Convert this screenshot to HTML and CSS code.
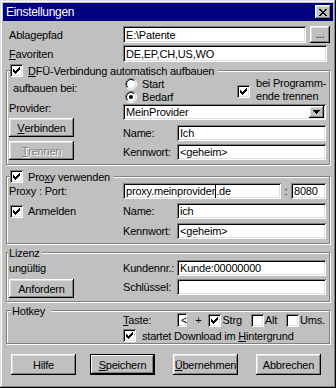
FILE: index.html
```html
<!DOCTYPE html>
<html lang="de">
<head>
    <meta charset="UTF-8">
    <meta name="viewport" content="width=device-width, initial-scale=1.0">
    <title>Einstellungen</title>
    <link rel="stylesheet" href="styles.css">
</head>
<body>

<div class="window">
    <div class="titlebar">
        <span class="title">Einstellungen</span>
        <span class="close">
            <svg width="8" height="7" viewBox="0 0 8 7" shape-rendering="crispEdges"><path d="M0 0h2v1h-2zM6 0h2v1h-2zM1 1h2v1h-2zM5 1h2v1h-2zM2 2h4v1h-4zM3 3h2v1h-2zM2 4h4v1h-4zM1 5h2v1h-2zM5 5h2v1h-2zM0 6h2v1h-2zM6 6h2v1h-2z" fill="#000"/></svg>
        </span>
    </div>

    <div class="content">
        <div class="line first">
            <span class="label">Ablagepfad</span>
            <div class="field path">E:\Patente</div>
            <div class="btn browse">...</div>
        </div>
        <div class="line">
            <span class="label"><u>F</u>avoriten</span>
            <div class="field fav">DE,EP,CH,US,WO</div>
        </div>

        <!-- DFÜ -->
        <div class="group">
            <div class="legend with-check">
                <span class="chk"><svg width="13" height="13" viewBox="0 0 13 13" shape-rendering="crispEdges"><path d="M9 3h1v1h-1zM8 4h2v1h-2zM3 5h1v1h-1zM7 5h3v1h-3zM3 6h2v1h-2zM6 6h3v1h-3zM3 7h5v1h-5zM4 8h3v1h-3zM5 9h1v1h-1z" fill="#000"/></svg></span>
                <span><u>D</u>FÜ-Verbindung automatisch aufbauen</span>
            </div>
            <div class="split">
                <div class="left">
                    <span class="text when">aufbauen bei:</span>
                    <span class="text provider">Provider:</span>
                    <div class="btn side connect"><u>V</u>erbinden</div>
                    <div class="btn side disabled hangup-btn"><u>T</u>rennen</div>
                </div>
                <div class="right">
                    <div class="options">
                        <div class="radios">
                            <div class="opt">
                                <svg width="12" height="12" viewBox="0 0 12 12"><circle cx="6" cy="6" r="4.5" fill="#fff"/><path d="M2.1 9.9A5.5 5.5 0 0 1 9.9 2.1" fill="none" stroke="#808080"/><path d="M9.9 2.1A5.5 5.5 0 0 1 2.1 9.9" fill="none" stroke="#fff"/><path d="M2.8 9.2A4.5 4.5 0 0 1 9.2 2.8" fill="none" stroke="#000"/><path d="M9.2 2.8A4.5 4.5 0 0 1 2.8 9.2" fill="none" stroke="#dfdfdf"/></svg>
                                <span>Start</span>
                            </div>
                            <div class="opt">
                                <svg width="12" height="12" viewBox="0 0 12 12"><circle cx="6" cy="6" r="4.5" fill="#fff"/><path d="M2.1 9.9A5.5 5.5 0 0 1 9.9 2.1" fill="none" stroke="#808080"/><path d="M9.9 2.1A5.5 5.5 0 0 1 2.1 9.9" fill="none" stroke="#fff"/><path d="M2.8 9.2A4.5 4.5 0 0 1 9.2 2.8" fill="none" stroke="#000"/><path d="M9.2 2.8A4.5 4.5 0 0 1 2.8 9.2" fill="none" stroke="#dfdfdf"/><circle cx="6" cy="6" r="2" fill="#000"/></svg>
                                <span>Bedarf</span>
                            </div>
                        </div>
                        <div class="hangup">
                            <span class="chk"><svg width="13" height="13" viewBox="0 0 13 13" shape-rendering="crispEdges"><path d="M9 3h1v1h-1zM8 4h2v1h-2zM3 5h1v1h-1zM7 5h3v1h-3zM3 6h2v1h-2zM6 6h3v1h-3zM3 7h5v1h-5zM4 8h3v1h-3zM5 9h1v1h-1z" fill="#000"/></svg></span>
                            <span class="hangup-text">bei Programm-<br>ende trennen</span>
                        </div>
                    </div>
                    <div class="field select">
                        <span>MeinProvider</span>
                        <span class="drop"><svg width="7" height="4" viewBox="0 0 7 4" shape-rendering="crispEdges"><path d="M0 0h7v1h-1v1h-1v1h-1v1h-1v-1h-1v-1h-1v-1h-1z" fill="#000"/></svg></span>
                    </div>
                    <div class="pair name-row">
                        <span class="label2">Name:</span>
                        <div class="field grow">Ich</div>
                    </div>
                    <div class="pair pw-row">
                        <span class="label2">Kennwort:</span>
                        <div class="field grow">&lt;geheim&gt;</div>
                    </div>
                </div>
            </div>
        </div>

        <!-- Proxy -->
        <div class="group proxy">
            <div class="legend with-check">
                <span class="chk"><svg width="13" height="13" viewBox="0 0 13 13" shape-rendering="crispEdges"><path d="M9 3h1v1h-1zM8 4h2v1h-2zM3 5h1v1h-1zM7 5h3v1h-3zM3 6h2v1h-2zM6 6h3v1h-3zM3 7h5v1h-5zM4 8h3v1h-3zM5 9h1v1h-1z" fill="#000"/></svg></span>
                <span>Pro<u>x</u>y verwenden</span>
            </div>
            <div class="row">
                <span class="col1">Proxy : Port:</span>
                <div class="field host">proxy.meinprovider<span class="caret"></span>.de</div>
                <span class="colon">:</span>
                <div class="field port">8080</div>
            </div>
            <div class="row gap4">
                <div class="col1 checkline">
                    <span class="chk"><svg width="13" height="13" viewBox="0 0 13 13" shape-rendering="crispEdges"><path d="M9 3h1v1h-1zM8 4h2v1h-2zM3 5h1v1h-1zM7 5h3v1h-3zM3 6h2v1h-2zM6 6h3v1h-3zM3 7h5v1h-5zM4 8h3v1h-3zM5 9h1v1h-1z" fill="#000"/></svg></span>
                    <span>Anmelden</span>
                </div>
                <span class="label2">Name:</span>
                <div class="field grow">ich</div>
            </div>
            <div class="row gap4">
                <span class="col1"></span>
                <span class="label2">Kennwort:</span>
                <div class="field grow">&lt;geheim&gt;</div>
            </div>
        </div>

        <!-- Lizenz -->
        <div class="group license">
            <div class="legend plain lic">Lizenz</div>
            <div class="row first-row">
                <span class="col1">ungültig</span>
                <span class="label2">Kundennr.:</span>
                <div class="field grow">Kunde:00000000</div>
            </div>
            <div class="row tall">
                <div class="col1"><div class="btn side">Anfordern</div></div>
                <span class="label2">Schlüssel:</span>
                <div class="field grow"></div>
            </div>
        </div>

        <!-- Hotkey -->
        <div class="group hotkey">
            <div class="legend plain hot">Hotkey</div>
            <div class="keys">
                <span class="label2"><u>T</u>aste:</span>
                <div class="field keybox">&lt;</div>
                <span class="plus">+</span>
                <span class="chk"><svg width="13" height="13" viewBox="0 0 13 13" shape-rendering="crispEdges"><path d="M9 3h1v1h-1zM8 4h2v1h-2zM3 5h1v1h-1zM7 5h3v1h-3zM3 6h2v1h-2zM6 6h3v1h-3zM3 7h5v1h-5zM4 8h3v1h-3zM5 9h1v1h-1z" fill="#000"/></svg></span>
                <span class="mod">Strg</span>
                <span class="chk"></span>
                <span class="mod">Alt</span>
                <span class="chk"></span>
                <span class="mod">Ums.</span>
            </div>
            <div class="background">
                <span class="chk"><svg width="13" height="13" viewBox="0 0 13 13" shape-rendering="crispEdges"><path d="M9 3h1v1h-1zM8 4h2v1h-2zM3 5h1v1h-1zM7 5h3v1h-3zM3 6h2v1h-2zM6 6h3v1h-3zM3 7h5v1h-5zM4 8h3v1h-3zM5 9h1v1h-1z" fill="#000"/></svg></span>
                <span>startet Download im <u>H</u>intergrund</span>
            </div>
        </div>

        <div class="actions">
            <div class="btn action">Hilfe</div>
            <div class="btn action default"><u>S</u>peichern</div>
            <div class="btn action"><u>Ü</u>bernehmen</div>
            <div class="btn action">Abbrechen</div>
        </div>
    </div>
</div>

</body>
</html>
```

FILE: styles.css
```css
body {
    margin: 0;
    background-color: #c0c0c0;
    font-family: "Liberation Sans", Arial, sans-serif;
    font-size: 11px;
    letter-spacing: -0.2px;
    color: #000;
}
.window {
    width: 336px;
    height: 388px;
    box-sizing: border-box;
    padding: 3px;
    background-color: #c0c0c0;
    box-shadow: inset -1px -1px #000, inset 1px 1px #dfdfdf, inset -2px -2px #808080, inset 2px 2px #fff;
}
.titlebar {
    height: 18px;
    display: flex;
    align-items: center;
    padding: 0 2px 0 3px;
    background-color: #000080;
    color: white;
}
.title {
    flex: 1;
    font-size: 12px;
    letter-spacing: -0.3px;
}
.close {
    width: 16px;
    height: 14px;
    display: flex;
    align-items: center;
    justify-content: center;
    background-color: #c0c0c0;
    box-shadow: inset -1px -1px #000, inset 1px 1px #fff, inset -2px -2px #808080, inset 2px 2px #dfdfdf;
}
u {
    text-decoration-thickness: 1px;
    text-underline-offset: 1px;
}

/* generic controls */
.field {
    height: 16px;
    box-sizing: border-box;
    display: flex;
    align-items: center;
    padding: 0 3px;
    background-color: white;
    white-space: nowrap;
    overflow: hidden;
    box-shadow: inset 1px 1px #808080, inset -1px -1px #fff, inset 2px 2px #000, inset -2px -2px #dfdfdf;
}
.grow {
    flex: 1;
}
.btn {
    box-sizing: border-box;
    display: flex;
    align-items: center;
    justify-content: center;
    background-color: #c0c0c0;
    box-shadow: inset -1px -1px #000, inset 1px 1px #fff, inset -2px -2px #808080, inset 2px 2px #dfdfdf;
}
.btn.disabled {
    color: #808080;
    text-shadow: 1px 1px #fff;
}
.chk {
    width: 13px;
    height: 13px;
    flex: none;
    box-sizing: border-box;
    background-color: white;
    box-shadow: inset 1px 1px #808080, inset -1px -1px #fff, inset 2px 2px #000, inset -2px -2px #dfdfdf;
}
.chk svg {
    display: block;
}

/* top lines */
.line {
    display: flex;
    align-items: center;
    height: 17px;
    padding-left: 6px;
    margin-top: 2px;
}
.line.first {
    margin-top: 5px;
}
.line .label {
    width: 114px;
}
.line .field {
    height: 17px;
}
.path {
    width: 183px;
}
.browse {
    width: 20px;
    height: 17px;
    margin-left: 4px;
    padding-bottom: 2px;
}
.fav {
    width: 204px;
}

/* group boxes */
.group {
    margin: 8px 3px 0;
    padding: 0 3px 4px 2px;
    border: 1px solid #808080;
    box-shadow: inset 1px 1px #fff, 1px 1px #fff;
}
.group.proxy {
    margin-top: 11px;
}
.legend {
    display: flex;
    align-items: center;
    width: max-content;
    height: 13px;
    margin-top: -7px;
    background-color: #c0c0c0;
}
.legend.with-check {
    gap: 5px;
    margin-left: 1px;
    padding-right: 4px;
}
.legend.lic {
    margin-left: -1px;
    padding: 0 2px 0 1px;
}
.legend.hot {
    margin-left: 2px;
    padding: 0 6px 0 1px;
}

/* DFÜ */
.split {
    display: flex;
}
.left {
    width: 114px;
    display: flex;
    flex-direction: column;
    align-items: flex-start;
}
.text {
    line-height: 14px;
}
.when {
    margin-top: 4px;
    padding-left: 4px;
}
.provider {
    margin-top: 6px;
}
.side {
    width: 65px;
    height: 19px;
}
.connect {
    margin-top: 3px;
}
.hangup-btn {
    margin-top: 4px;
}
.right {
    flex: 1;
    min-width: 0;
}
.options {
    display: flex;
    height: 26px;
}
.radios {
    width: 114px;
    flex: none;
}
.opt {
    display: flex;
    align-items: center;
    gap: 5px;
    height: 13px;
    padding-left: 2px;
}
.opt svg {
    flex: none;
}
.hangup {
    display: flex;
    align-items: flex-start;
    gap: 6px;
}
.hangup .chk {
    margin-top: 8px;
}
.hangup-text {
    line-height: 13px;
    white-space: nowrap;
}
.select {
    margin-top: 1px;
    padding-right: 2px;
}
.select span:first-child {
    flex: 1;
}
.drop {
    width: 15px;
    height: 12px;
    display: flex;
    align-items: center;
    justify-content: center;
    background-color: #c0c0c0;
    box-shadow: inset -1px -1px #000, inset 1px 1px #fff, inset -2px -2px #808080, inset 2px 2px #dfdfdf;
}
.pair {
    display: flex;
    align-items: center;
}
.name-row {
    margin-top: 5px;
}
.pw-row {
    margin-top: 3px;
}
.label2 {
    width: 54px;
    flex: none;
    white-space: nowrap;
}

/* proxy / license rows */
.row {
    display: flex;
    align-items: center;
}
.gap4 {
    margin-top: 4px;
}
.col1 {
    width: 114px;
    flex: none;
}
.checkline {
    display: flex;
    align-items: center;
    gap: 5px;
    padding-left: 1px;
    box-sizing: border-box;
}
.host {
    width: 158px;
}
.caret {
    display: inline-block;
    width: 1px;
    height: 13px;
    background-color: #000;
}
.colon {
    width: 10px;
    text-align: center;
}
.port {
    flex: 1;
}
.license .first-row {
    margin-top: 1px;
}
.row.tall {
    margin-top: 3px;
    align-items: flex-start;
}
.row.tall .label2 {
    line-height: 16px;
}
.license {
    padding-bottom: 3px;
}

/* hotkey */
.hotkey {
    padding-bottom: 1px;
}
.keys {
    display: flex;
    align-items: center;
    height: 14px;
    margin-top: -4px;
    padding-left: 114px;
}
.keybox {
    width: 15px;
    height: 14px;
    padding: 0 0 0 4px;
    overflow: visible;
}
.plus {
    margin: 0 7px 0 8px;
}
.mod {
    margin-left: 1px;
    margin-right: 9px;
}
.background {
    display: flex;
    align-items: center;
    gap: 6px;
    height: 13px;
    margin-top: 2px;
    padding-left: 114px;
}

/* dialog buttons */
.actions {
    display: flex;
    margin-top: 10px;
    padding-left: 8px;
}
.action {
    width: 65px;
    height: 21px;
}
.action + .action {
    margin-left: 18px;
}
.action.default {
    margin-left: 14px;
    box-shadow: inset 0 0 0 1px #000, inset -2px -2px #000, inset 2px 2px #fff, inset -3px -3px #808080;
}
```
